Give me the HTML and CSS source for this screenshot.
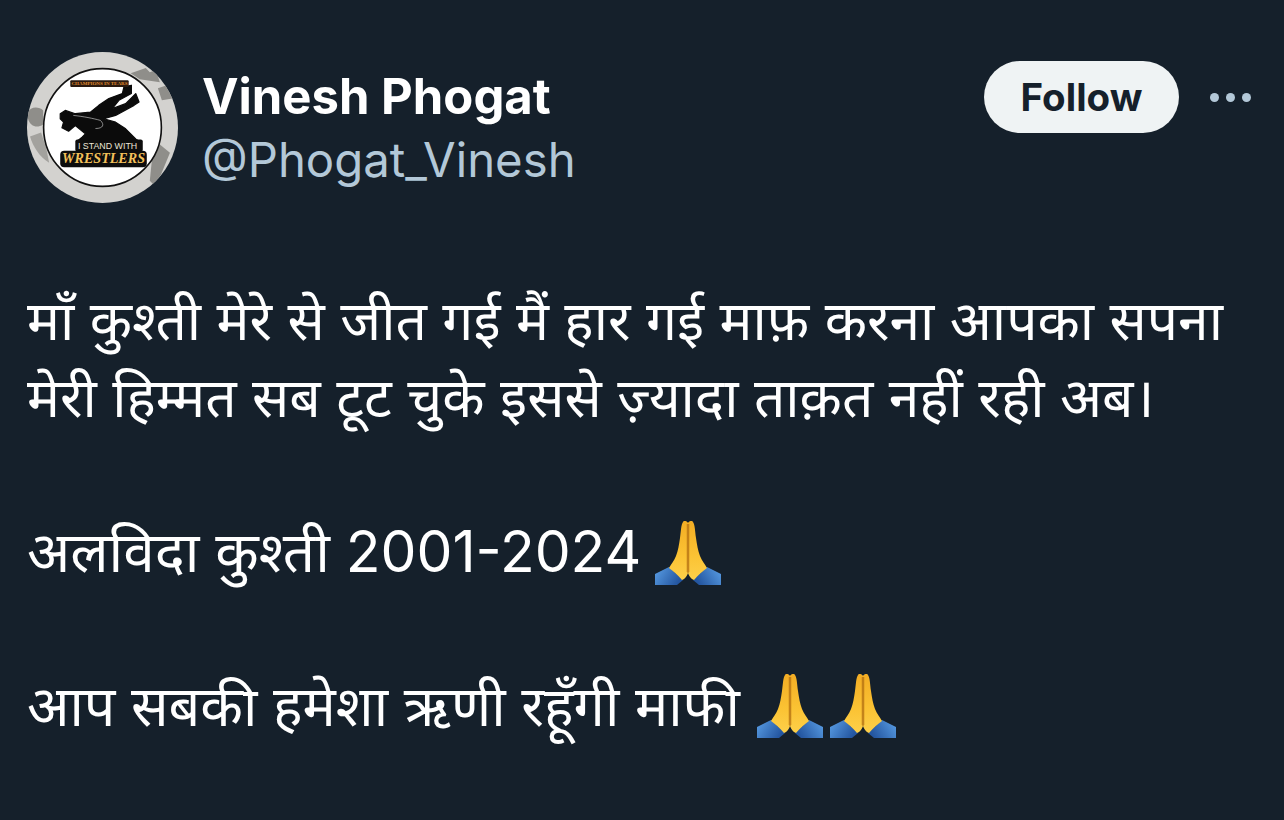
FILE: index.html
```html
<!DOCTYPE html>
<html lang="en">

<head>
    <meta charset="UTF-8">
    <meta name="viewport" content="width=device-width, initial-scale=1.0">
    <title>Vinesh Phogat</title>
    <link rel="stylesheet" href="styles.css">
</head>

<body>
    <svg class="defs" width="0" height="0" aria-hidden="true">
        <defs>
            <linearGradient id="hand" x1="0" y1="0" x2="0" y2="1">
                <stop offset="0" stop-color="#f3ad24"/>
                <stop offset="0.6" stop-color="#fbc334"/>
                <stop offset="1" stop-color="#fdd04a"/>
            </linearGradient>
            <linearGradient id="sleeveLeft" x1="0" y1="0" x2="1" y2="0.4">
                <stop offset="0" stop-color="#5a9fe6"/>
                <stop offset="1" stop-color="#2456a0"/>
            </linearGradient>
            <linearGradient id="sleeveRight" x1="1" y1="0" x2="0" y2="0.4">
                <stop offset="0" stop-color="#5a9fe6"/>
                <stop offset="1" stop-color="#2456a0"/>
            </linearGradient>
            <clipPath id="ring">
                <circle cx="75" cy="75" r="75"/>
            </clipPath>
            <symbol id="pray" viewBox="0 0 66 66">
                <path fill="url(#sleeveLeft)" d="M0 53 L14 46 L28 59 L22 64 L0 64Z"/>
                <path fill="url(#sleeveRight)" d="M66 53 L52 46 L38 59 L44 64 L66 64Z"/>
                <path fill="url(#hand)" d="M33 2 C32 0 29 -1 28 1 C26 4 26 10 25 17 C24 24 23 30 21 35 C19 40 16 43 14 47 C18 50 23 54 27 59 C30 58 32 55 33 52Z"/>
                <path fill="url(#hand)" d="M33 2 C34 0 37 -1 38 1 C40 4 40 10 41 17 C42 24 43 30 45 35 C47 40 50 43 52 47 C48 50 43 54 39 59 C36 58 34 55 33 52Z"/>
                <path fill="none" stroke="#c98419" stroke-width="3" stroke-opacity="0.55" d="M33 3 V51"/>
                <path fill="none" stroke="#a8660f" stroke-width="1" d="M33 3 V52"/>
            </symbol>
        </defs>
    </svg>

    <main class="tweet">
        <!-- Author row -->
        <header class="author">
            <svg class="avatar" viewBox="0 0 150 150" role="img" aria-label="I stand with wrestlers">
                <circle cx="75" cy="75" r="75" fill="#d3d2cf"/>
                <g clip-path="url(#ring)" fill="#8f8e8a">
                    <path d="M1 60 C3 54 12 54 16 58 L16 72 C10 76 3 74 1 66Z"/>
                    <path fill="#a3a29e" d="M3 84 L14 80 L19 95 L22 110 C12 104 6 94 3 84Z"/>
                    <path d="M103 21 L118 16 L122 20 L128 18 L132 30 L112 27Z"/>
                    <path d="M130 36 L142 32 L146 46 L134 48Z"/>
                    <path d="M124 108 L132 92 L142 100 L128 134 L122 128Z"/>
                </g>
                <circle cx="75" cy="75" r="58.5" fill="#fff" stroke="#111" stroke-width="1.6"/>
                <path fill="#0b0b0b" stroke="#0b0b0b" stroke-width="1.2" stroke-linejoin="round" d="M33 61.3 L38 58 L48 61.3 L63 59.7 L71.3 53 L81.3 46.3 L94.7 41.3 L96.3 34.7 L103.7 33 L103.7 41.3 L91.3 48 L84.7 56.3 L98 51.3 L108 41.3 L111.3 49.7 L106.3 53 L88 63 L76.3 66.3 L88 69.7 L98 76.3 L108 86.3 L111.3 88.7 L49.7 88.7 L54.7 84.7 L58 81.3 L48 73 L41.3 78.7 L34.7 75.3 L36.3 69.7 L33 66.3Z"/>
                <path fill="none" stroke="#d8d8d8" stroke-width="0.6" d="M46 63 C56 64 66 66 73 68 C77 72 76 76 68 76"/>
                <rect x="43" y="28" width="58" height="6.7" rx="1" fill="#2a1a10"/>
                <text class="avatar-top" x="72" y="33.2" text-anchor="middle">CHAMPIONS IN TEARS</text>
                <rect x="48" y="87" width="67" height="12" rx="2" fill="#0d0d0d"/>
                <text class="avatar-mid" x="80" y="96" text-anchor="middle">I STAND WITH</text>
                <rect x="33" y="98" width="86" height="16.5" rx="4" fill="#0d0d0d"/>
                <text class="avatar-big" x="76" y="110" text-anchor="middle">WRESTLERS</text>
            </svg>

            <div class="names">
                <div class="display-name">Vinesh Phogat</div>
                <div class="handle">@Phogat_Vinesh</div>
            </div>

            <button class="follow">Follow</button>

            <div class="more" aria-label="More">
                <span class="dot"></span>
                <span class="dot"></span>
                <span class="dot"></span>
            </div>
        </header>

        <!-- Tweet text -->
        <div class="text">
            <p>माँ कुश्ती मेरे से जीत गई मैं हार गई माफ़ करना आपका सपना<br>मेरी हिम्मत सब टूट चुके इससे ज़्यादा ताक़त नहीं रही अब।</p>
            <p class="farewell">अलविदा कुश्ती <span class="num">2001-2024</span> <svg class="emoji"><use href="#pray"/></svg></p>
            <p class="thanks">आप सबकी हमेशा ऋणी रहूँगी माफी <svg class="emoji"><use href="#pray"/></svg><svg class="emoji"><use href="#pray"/></svg></p>
        </div>
    </main>
</body>
</html>
```

FILE: styles.css
```css
body {
    margin: 0;
    background-color: #15202b;
    color: #fff;
    font-family: Inter, "Noto Sans", "Noto Sans Devanagari", sans-serif;
}

.defs {
    display: block;
    height: 0;
}

.tweet {
    padding: 52px 33px 0 27px;
}

.author {
    display: flex;
    align-items: flex-start;
}

.avatar {
    width: 151px;
    height: 151px;
    flex-shrink: 0;
}

.avatar-top {
    font: bold 5px "Liberation Serif", serif;
    fill: #e08a2c;
}

.avatar-mid {
    font: 8.8px "Liberation Sans", sans-serif;
    fill: #ece6d6;
}

.avatar-big {
    font: italic bold 14px "Liberation Serif", serif;
    fill: #f3c05a;
}

.names {
    flex: 1;
    margin-left: 24px;
    padding-top: 14px;
}

.display-name {
    font-size: 49px;
    font-weight: 700;
    line-height: 62px;
}

.handle {
    font-size: 47.3px;
    line-height: 63px;
    color: #b3c8d8;
}

.follow {
    width: 195px;
    height: 72px;
    margin-top: 9px;
    background-color: #eff3f4;
    color: #15202b;
    border: none;
    border-radius: 36px;
    font-family: inherit;
    font-size: 38.5px;
    font-weight: 700;
}

.more {
    display: flex;
    gap: 7px;
    margin: 41px 0 0 31px;
}

.dot {
    width: 9px;
    height: 9px;
    border-radius: 50%;
    background-color: #b3c8d8;
}

.text {
    margin-top: 79px;
    font-size: 55.1px;
    line-height: 77px;
}

.text p {
    margin: 0 0 77px;
}

.farewell {
    font-size: 56.6px;
}

.thanks {
    font-size: 55.6px;
}

.num {
    font-size: 57px;
}

.emoji {
    width: 66px;
    height: 66px;
    margin-left: 2px;
    vertical-align: -14px;
}

.farewell .emoji {
    margin-left: -2px;
    vertical-align: -15px;
}

.emoji + .emoji {
    margin-left: 7px;
}
```
